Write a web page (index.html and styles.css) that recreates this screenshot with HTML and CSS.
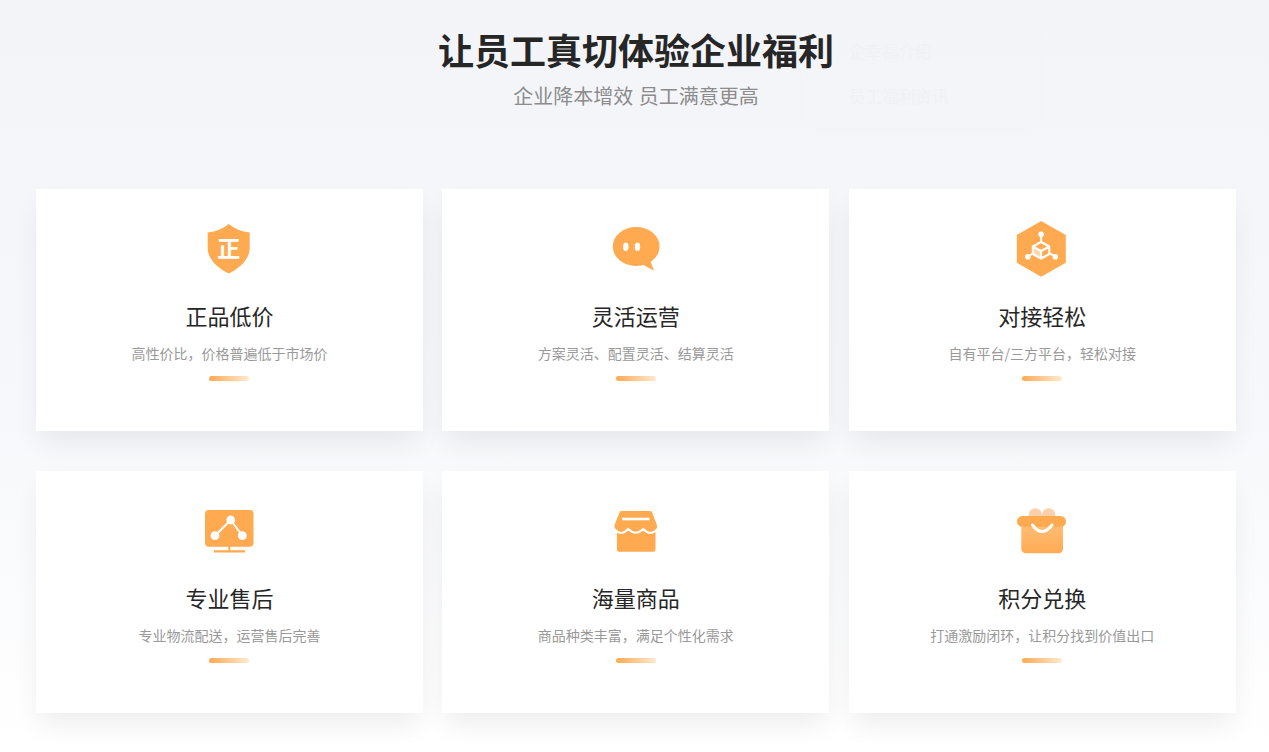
FILE: index.html
```html
<!DOCTYPE html>
<html lang="zh-CN">
<head>
<meta charset="utf-8">
<title>企业福利</title>
<link rel="stylesheet" href="styles.css">
</head>
<body>
<section class="page">
  <div class="ghost">
    <p class="ghost-item">企幸福介绍</p>
    <p class="ghost-item">员工福利资讯</p>
  </div>
  <header class="head">
    <h1 class="title">让员工真切体验企业福利</h1>
    <p class="subtitle">企业降本增效 员工满意更高</p>
  </header>
  <div class="grid">
    <article class="card">
      <svg class="icon" viewBox="8.8 9 60 60"><path class="fill" d="M38.5 14Q47 21 59.5 22.5V38C59.5 50 48 59 38.5 63.5C29 59 17.5 50 17.5 38V22.5Q30 21 38.5 14Z"/><text class="glyph" x="38.5" y="46.8">正</text></svg>
      <h2 class="name">正品低价</h2>
      <p class="desc">高性价比，价格普遍低于市场价</p>
      <span class="bar"></span>
    </article>
    <article class="card">
      <svg class="icon" viewBox="9.2 9 60 60"><ellipse class="fill" cx="39.4" cy="36.5" rx="23.4" ry="19.5"/><path class="fill" d="M45 54L57.3 60.7L53 50Z"/><ellipse class="white" cx="29" cy="36.7" rx="2.7" ry="4.3"/><ellipse class="white" cx="40.7" cy="36.7" rx="2.7" ry="4.3"/></svg>
      <h2 class="name">灵活运营</h2>
      <p class="desc">方案灵活、配置灵活、结算灵活</p>
      <span class="bar"></span>
    </article>
    <article class="card">
      <svg class="icon" viewBox="10.2 9 60 60"><path class="fill" d="M39.3 11L64 25V52.7L39.3 66.8L15 52.7V25Z"/><path class="line" d="M39.3 24.3V32M26 46.7L31 43.5M54 46.7L48 43.5"/><circle class="white" cx="39.3" cy="24.3" r="2.8"/><circle class="white" cx="26" cy="46.7" r="2.8"/><circle class="white" cx="53.5" cy="46.7" r="2.8"/><path class="soft" d="M31.5 37L39 41V47.5L31.5 43.5Z"/><path class="line" d="M39.3 32L47.5 36.5V44L39.3 48.5L31 44V36.5ZM31 36.5L39.3 41L47.5 36.5M39.3 41V48.5"/></svg>
      <h2 class="name">对接轻松</h2>
      <p class="desc">自有平台/三方平台，轻松对接</p>
      <span class="bar"></span>
    </article>
    <article class="card">
      <svg class="icon" viewBox="9 6 60 60"><rect class="fill" x="15" y="15" width="48.5" height="36.7" rx="4"/><path class="fill" d="M38.3 51h2v5h-2zM24 55.2h31v2.4H24z"/><path class="line" d="M25 40.7L40.7 25L52.3 40.7"/><circle class="white" cx="40.7" cy="25" r="4.4"/><circle class="white" cx="25" cy="40.7" r="4.4"/><circle class="white" cx="52.3" cy="40.7" r="4.4"/></svg>
      <h2 class="name">专业售后</h2>
      <p class="desc">专业物流配送，运营售后完善</p>
      <span class="bar"></span>
    </article>
    <article class="card">
      <svg class="icon" viewBox="9.8 6 60 60"><path class="fill" d="M20.7 36H59.3V54.5A2.2 2.2 0 0 1 57 56.7H23A2.2 2.2 0 0 1 20.7 54.5Z"/><path class="fill edge" d="M25 15H54Q56 15 56.8 17L61.5 29.5Q62.5 33 61 34.5Q54 41.5 47 34Q39.5 41.5 32 34Q25 41.5 18.5 34.5Q16.5 32.5 17.5 29.5L22.5 17Q23.2 15 25 15Z"/><rect class="white" x="26" y="22.7" width="27.3" height="2.6"/></svg>
      <h2 class="name">海量商品</h2>
      <p class="desc">商品种类丰富，满足个性化需求</p>
      <span class="bar"></span>
    </article>
    <article class="card">
      <svg class="icon" viewBox="10 6 60 60"><defs><linearGradient id="bag" x1="0" y1="0" x2="0" y2="1"><stop offset="0" stop-color="#ffbe78"/><stop offset="1" stop-color="#ffab52"/></linearGradient></defs><circle class="lobe" cx="33.3" cy="20" r="6.7"/><circle class="lobe" cx="46.7" cy="20" r="6.7"/><path class="bag" d="M19.3 28H61V53.8A4.5 4.5 0 0 1 56.5 58.3H23.8A4.5 4.5 0 0 1 19.3 53.8Z"/><rect class="fill" x="15" y="21" width="49" height="10.7" rx="5.3"/><path class="smile" d="M30.5 30Q40 43 50 30"/></svg>
      <h2 class="name">积分兑换</h2>
      <p class="desc">打通激励闭环，让积分找到价值出口</p>
      <span class="bar"></span>
    </article>
  </div>
</section>
</body>
</html>
```
FILE: styles.css
```css
* { box-sizing: border-box; }
html, body { margin: 0; padding: 0; }
body {
  font-family: "Noto Sans CJK SC", "Noto Sans", sans-serif;
  overflow: hidden;
}
.page {
  position: relative;
  height: 752px;
  padding: 23px 33px 0 36px;
  background: linear-gradient(180deg, #f3f4f8 0%, #f7f8fb 55%, #ffffff 100%);
  overflow: hidden;
}
.ghost {
  position: absolute;
  left: 800px;
  top: 17px;
  width: 243px;
  height: 113px;
  padding: 21px 0 0 48px;
  border: 1px solid rgba(238, 238, 245, 0.25);
  border-radius: 22px;
}
.ghost-item {
  margin: 0 0 21px;
  font-size: 16.6px;
  line-height: 24px;
  color: #f0f1f5;
}
.head { position: relative; text-align: center; }
.title {
  margin: 0;
  font-size: 36px;
  line-height: 52px;
  font-weight: 700;
  color: #262626;
}
.subtitle {
  margin: 6px 0 0;
  font-size: 20px;
  line-height: 30px;
  word-spacing: 1px;
  color: #8c8c8c;
}
.grid {
  position: relative;
  display: grid;
  grid-template-columns: repeat(3, 386.8px);
  grid-auto-rows: 242px;
  column-gap: 19.6px;
  row-gap: 40px;
  margin-top: 78px;
}
.card {
  display: flex;
  flex-direction: column;
  align-items: center;
  padding-top: 30px;
  background: #ffffff;
  box-shadow: 0 14px 26px -4px rgba(0, 0, 0, 0.075);
}
.icon { display: block; width: 60px; height: 60px; }
.fill { fill: #ffaa50; }
.white { fill: #ffffff; }
.soft { fill: #ffd9ad; }
.line { fill: none; stroke: #ffffff; stroke-width: 2; stroke-linejoin: round; }
.edge { stroke: #ffffff; stroke-width: 2; }
.glyph {
  fill: #ffffff;
  font-size: 23px;
  font-weight: 700;
  text-anchor: middle;
}
.lobe { fill: #fdd0a8; }
.bag { fill: url(#bag); }
.smile { fill: none; stroke: #ffffff; stroke-width: 3; stroke-linecap: round; }
.name {
  margin: 20px 0 0;
  font-size: 22px;
  line-height: 32px;
  font-weight: 400;
  color: #262626;
}
.desc {
  margin: 12px 0 0;
  font-size: 14px;
  line-height: 20px;
  color: #999999;
}
.bar {
  display: block;
  width: 40px;
  height: 5px;
  margin-top: 13px;
  border-radius: 3px;
  background: linear-gradient(90deg, #ffaa50 0%, #ffe9cf 100%);
}
```
